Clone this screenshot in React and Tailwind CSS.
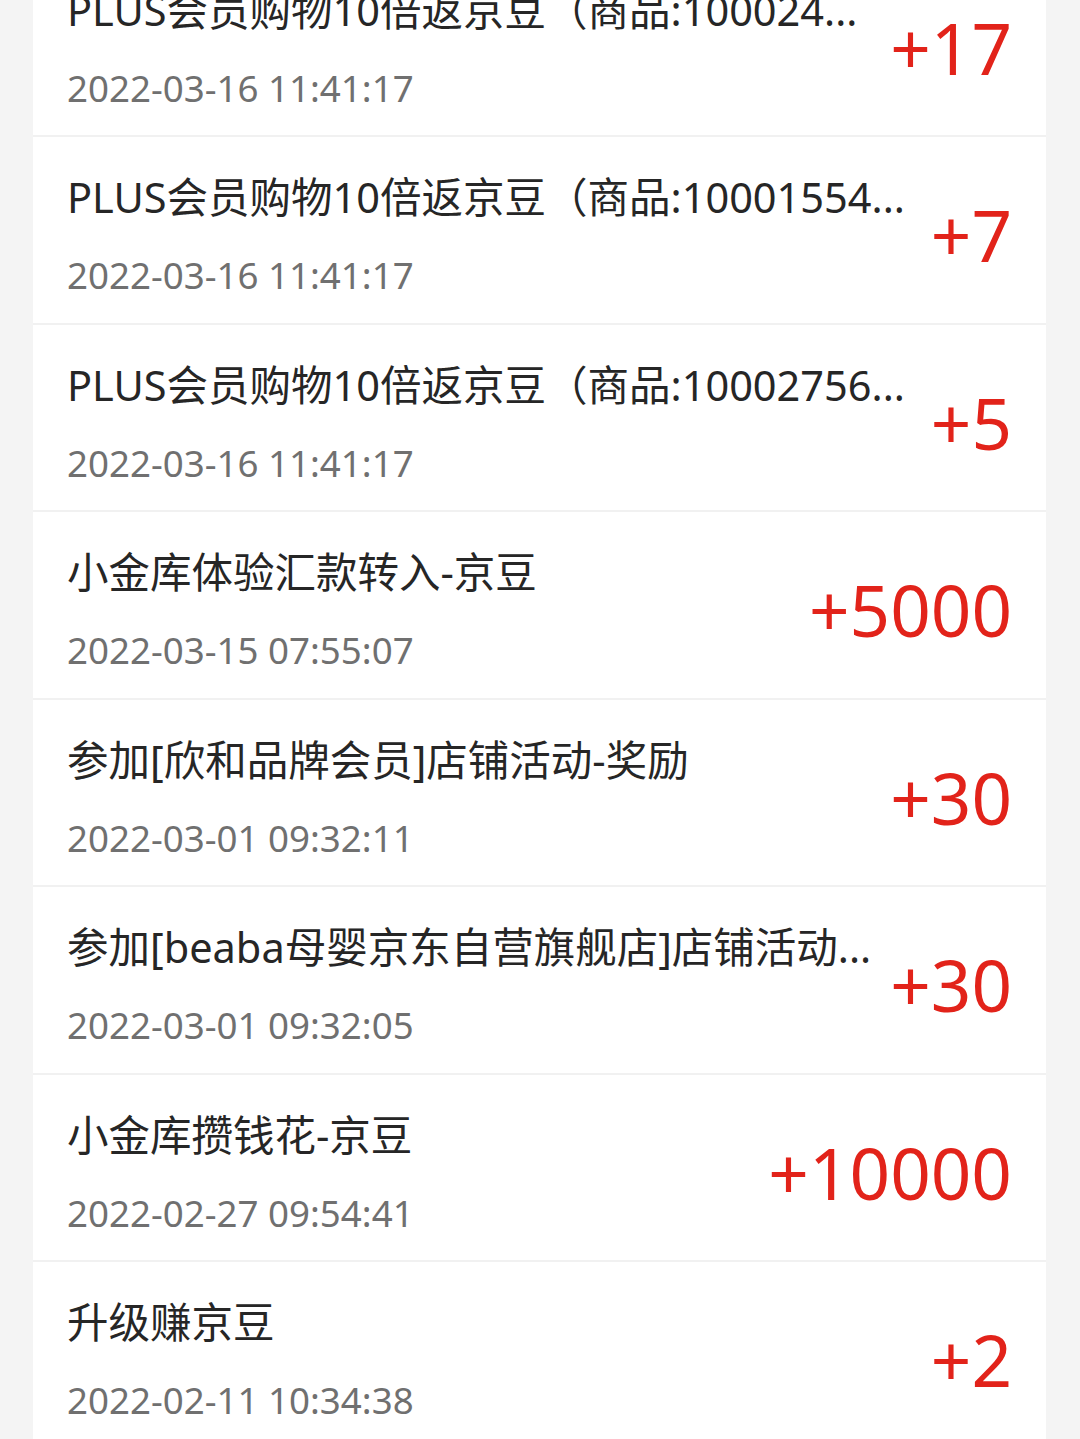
import React from "react";

const rows = [
  { title: "PLUS会员购物10倍返京豆（商品:100024...", date: "2022-03-16 11:41:17", amount: "+17" },
  { title: "PLUS会员购物10倍返京豆（商品:10001554...", date: "2022-03-16 11:41:17", amount: "+7" },
  { title: "PLUS会员购物10倍返京豆（商品:10002756...", date: "2022-03-16 11:41:17", amount: "+5" },
  { title: "小金库体验汇款转入-京豆", date: "2022-03-15 07:55:07", amount: "+5000" },
  { title: "参加[欣和品牌会员]店铺活动-奖励", date: "2022-03-01 09:32:11", amount: "+30" },
  { title: "参加[beaba母婴京东自营旗舰店]店铺活动...", date: "2022-03-01 09:32:05", amount: "+30" },
  { title: "小金库攒钱花-京豆", date: "2022-02-27 09:54:41", amount: "+10000" },
  { title: "升级赚京豆", date: "2022-02-11 10:34:38", amount: "+2" },
];

export default function App() {
  return (
    <div
      className="h-[1439px] w-[1080px] overflow-hidden bg-[#f4f4f4]"
      style={{ fontFamily: '"Noto Sans", "Noto Sans CJK SC", sans-serif' }}
    >
      <div className="ml-[33px] w-[1013px] -mt-[50.5px] bg-white">
        {rows.map((r, i) => (
          <div
            key={i}
            className="flex h-[187.5px] items-start border-b-2 border-[#f1f1f1] pl-[34px] pr-[34px]"
          >
            <div className="min-w-0 flex-1 pr-[16px]">
              <div className="mt-[36px] whitespace-nowrap text-[41.5px] leading-[48px] text-[#262626]">
                {r.title}
              </div>
              <div className="mt-[32px] whitespace-nowrap text-[36.7px] leading-[44px] text-[#707070]">
                {r.date}
              </div>
            </div>
            <div className="mt-[72px] shrink-0 text-[71px] leading-[52px] text-[#e2231a]">
              {r.amount}
            </div>
          </div>
        ))}
      </div>
    </div>
  );
}
